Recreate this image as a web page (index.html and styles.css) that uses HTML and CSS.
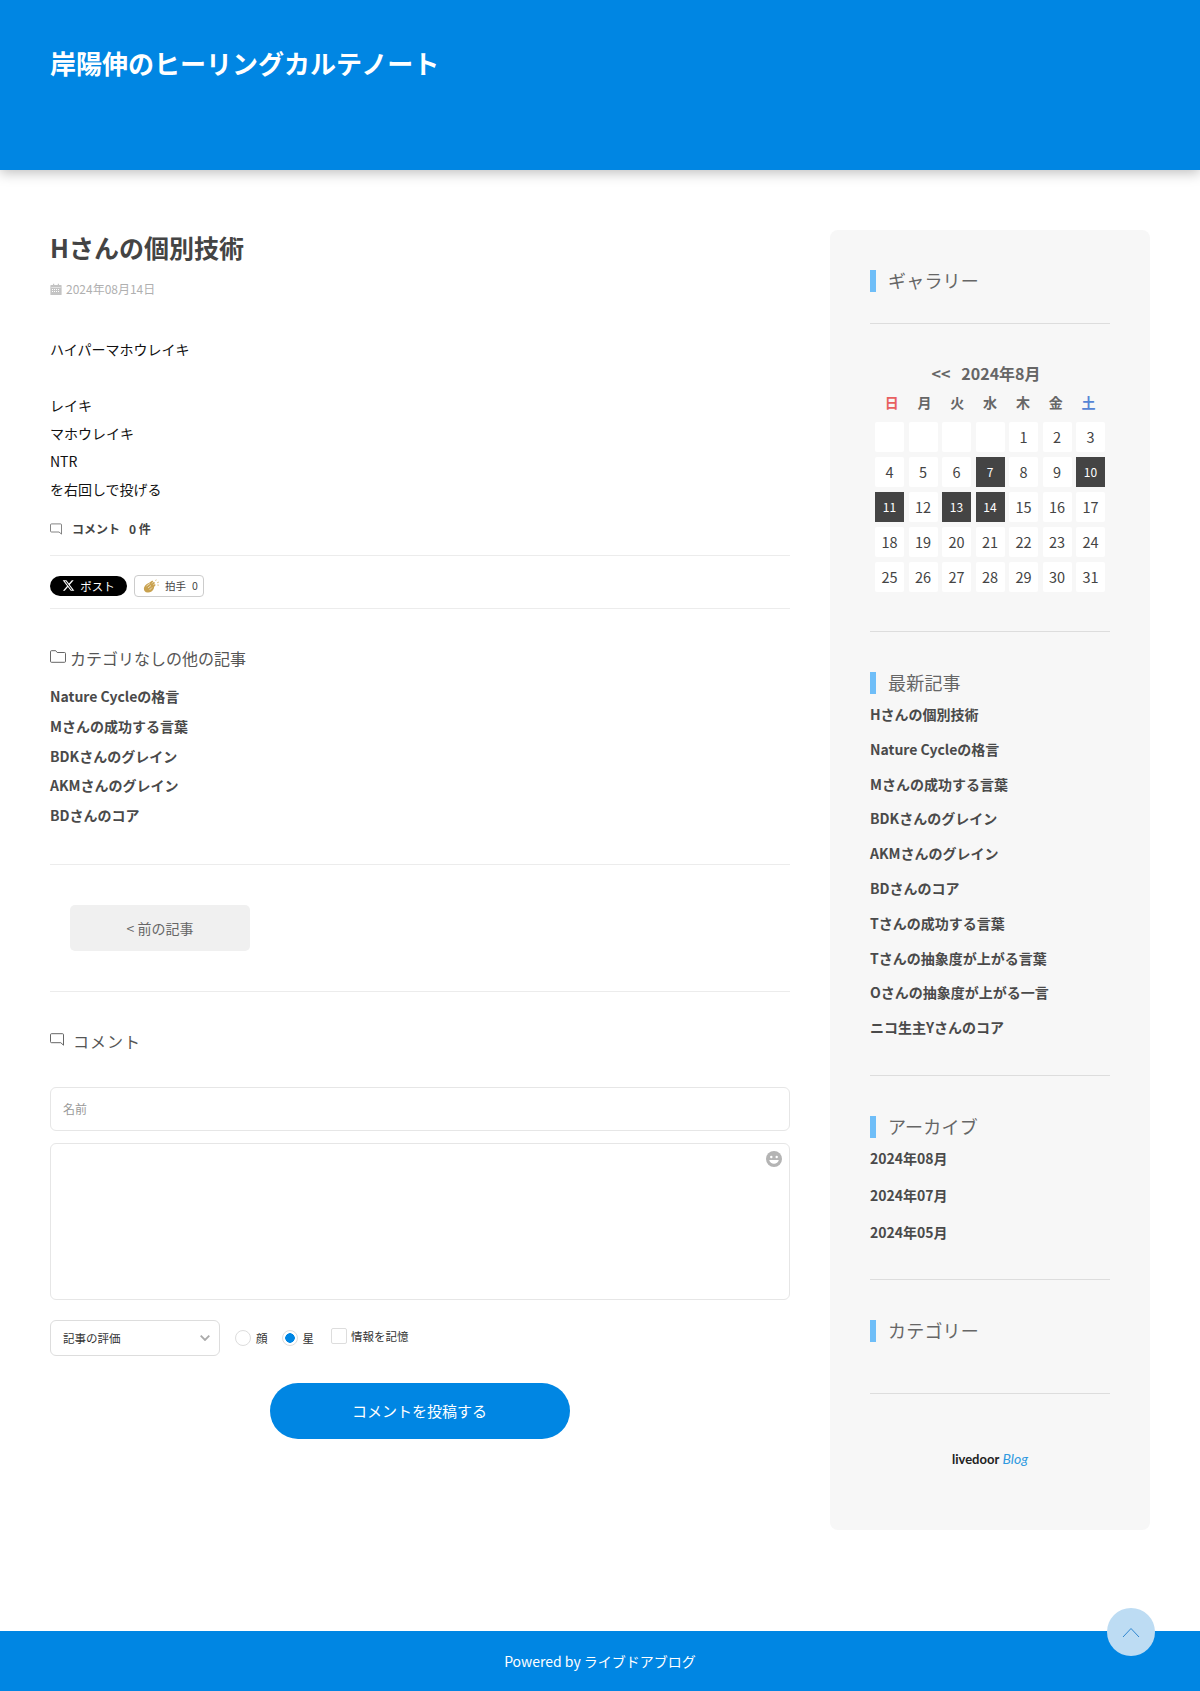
FILE: index.html
```html
<!DOCTYPE html>
<html lang="ja">
<head>
<meta charset="utf-8">
<title>岸陽伸のヒーリングカルテノート</title>
<link rel="stylesheet" href="styles.css">
</head>
<body>
<header class="site-header">
  <h1 class="site-title">岸陽伸のヒーリングカルテノート</h1>
</header>
<div class="wrapper">
  <main class="main">
    <h2 class="entry-title">Hさんの個別技術</h2>
    <p class="entry-date">
      <svg class="ico-cal" viewBox="0 0 12 12" width="12" height="12"><path fill="#c4c4c4" d="M1 2h2V.7h1.2V2h3.6V.7H9V2h2a.6.6 0 0 1 .6.6v8.800a.6.6 0 0 1-.6.6H1a.6.6 0 0 1-.6-.6V2.600A.6.6 0 0 1 1 2z"/><path fill="#fff" d="M1.300 4.300h9.400v.5H1.300zM2 6h1v1H2zm2 0h1v1H4zm2 0h1v1H6zm2 0h1v1H8zM2 8h1v1H2zm2 0h1v1H4zm2 0h1v1H6zm2 0h1v1H8z"/></svg>
      <span>2024年08月14日</span>
    </p>
    <div class="entry-body">
      <p>ハイパーマホウレイキ</p>
      <p>&nbsp;</p>
      <p>レイキ</p>
      <p>マホウレイキ</p>
      <p>NTR</p>
      <p>を右回しで投げる</p>
    </div>
    <p class="entry-comments">
      <svg class="ico-bubble" viewBox="0 0 12 12" width="12" height="12"><path fill="none" stroke="#666" stroke-width=".8" d="M1.500.9h9a1 1 0 0 1 1 1v9.200L9 9H1.500a1 1 0 0 1-1-1V1.900a1 1 0 0 1 1-1z"/></svg>
      <span>コメント</span><span class="count">0 件</span>
    </p>
    <div class="share">
      <span class="x-btn">
        <svg viewBox="0 0 24 24" width="13" height="13"><path fill="#fff" d="M18.240 2.250h3.310l-7.230 8.260 8.500 11.240H16.170l-5.210-6.820-5.970 6.820H1.680l7.730-8.840L1.250 2.250H8.080l4.710 6.230zm-1.160 17.520h1.830L7.080 4.130H5.120z"/></svg>
        <span>ポスト</span>
      </span>
      <span class="clap-btn">
        <svg viewBox="0 0 17 14" width="17" height="14"><g fill="#c9a24f"><ellipse cx="6" cy="8.800" rx="5.400" ry="4.400" transform="rotate(-35 6 8.800)"/><path d="M5.500 4.200 9.300 1.500l1 1.200-3.300 3zM7.500 5.800l3.500-3 1 1.200L8.800 7.200zM9 7.500l2.800-2.600 .9 1.200-2.600 2.800z"/></g><path fill="none" stroke="#fff" stroke-width=".6" d="M3.500 7 7 4.500M5 9l3-2.500M6.500 11 9 8.500"/><path fill="none" stroke="#c9a24f" stroke-width=".6" d="M12.500 2l.8-1.500M14 3.800l2-.8M14.200 6l1.800.2"/></svg>
        <span>拍手</span><span class="clap-num">0</span>
      </span>
    </div>
    <section class="related">
      <h3 class="related-title">
        <svg viewBox="0 0 16 13" width="16" height="13"><path fill="none" stroke="#555" stroke-width=".9" d="M1.500.7h4.200l1.500 1.800h7.300a1 1 0 0 1 1 1v7.800a1 1 0 0 1-1 1H1.500a1 1 0 0 1-1-1V1.700a1 1 0 0 1 1-1z"/></svg>
        <span>カテゴリなしの他の記事</span>
      </h3>
      <ul class="related-list">
        <li>Nature Cycleの格言</li>
        <li>Mさんの成功する言葉</li>
        <li>BDKさんのグレイン</li>
        <li>AKMさんのグレイン</li>
        <li>BDさんのコア</li>
      </ul>
    </section>
    <nav class="pager"><span class="prev-btn">&lt; 前の記事</span></nav>
    <section class="comment-form">
      <h3 class="comment-title">
        <svg viewBox="0 0 14 13" width="14" height="13"><path fill="none" stroke="#555" stroke-width=".9" d="M1.500.7h11a1 1 0 0 1 1 1v10.500l-2.700-2.500H1.500a1 1 0 0 1-1-1V1.700a1 1 0 0 1 1-1z"/></svg>
        <span>コメント</span>
      </h3>
      <div class="field name-field">名前</div>
      <div class="field text-field">
        <svg class="ico-smile" viewBox="0 0 16 16" width="16" height="16"><circle cx="8" cy="8" r="8" fill="#b4b4b4"/><circle cx="5.300" cy="6" r="1.200" fill="#fff"/><circle cx="10.700" cy="6" r="1.200" fill="#fff"/><path fill="#fff" d="M3.200 9h9.600c-.5 2.300-2.500 3.700-4.800 3.700S3.700 11.300 3.200 9z"/></svg>
      </div>
      <div class="rating-row">
        <div class="select">
          <span>記事の評価</span>
          <svg viewBox="0 0 10 6" width="10" height="6"><path fill="none" stroke="#aaa" stroke-width="1.800" d="M.7.7 5 5l4.300-4.300"/></svg>
        </div>
        <span class="radio"></span><span class="radio-label">顔</span>
        <span class="radio on"></span><span class="radio-label">星</span>
        <span class="remember"><span class="check"></span><span>情報を記憶</span></span>
      </div>
      <div class="submit-wrap"><span class="submit">コメントを投稿する</span></div>
    </section>
  </main>
  <aside class="side">
    <section class="widget">
      <h4 class="widget-title">ギャラリー</h4>
      <div class="gallery-gap"></div>
      <div class="cal">
        <div class="cal-head"><span class="cal-prev">&lt;&lt;</span><span>2024年8月</span></div>
        <div class="cal-dows">
          <span class="dow sun">日</span><span class="dow">月</span><span class="dow">火</span><span class="dow">水</span><span class="dow">木</span><span class="dow">金</span><span class="dow sat">土</span>
        </div>
        <div class="cal-grid">
          <span class="d"></span><span class="d"></span><span class="d"></span><span class="d"></span><span class="d">1</span><span class="d">2</span><span class="d">3</span>
          <span class="d">4</span><span class="d">5</span><span class="d">6</span><span class="d on">7</span><span class="d">8</span><span class="d">9</span><span class="d on">10</span>
          <span class="d on">11</span><span class="d">12</span><span class="d on">13</span><span class="d on">14</span><span class="d">15</span><span class="d">16</span><span class="d">17</span>
          <span class="d">18</span><span class="d">19</span><span class="d">20</span><span class="d">21</span><span class="d">22</span><span class="d">23</span><span class="d">24</span>
          <span class="d">25</span><span class="d">26</span><span class="d">27</span><span class="d">28</span><span class="d">29</span><span class="d">30</span><span class="d">31</span>
        </div>
      </div>
    </section>
    <section class="widget">
      <h4 class="widget-title">最新記事</h4>
      <ul class="side-list recent">
        <li>Hさんの個別技術</li>
        <li>Nature Cycleの格言</li>
        <li>Mさんの成功する言葉</li>
        <li>BDKさんのグレイン</li>
        <li>AKMさんのグレイン</li>
        <li>BDさんのコア</li>
        <li>Tさんの成功する言葉</li>
        <li>Tさんの抽象度が上がる言葉</li>
        <li>Oさんの抽象度が上がる一言</li>
        <li>ニコ生主Yさんのコア</li>
      </ul>
    </section>
    <section class="widget">
      <h4 class="widget-title">アーカイブ</h4>
      <ul class="side-list archive">
        <li>2024年08月</li>
        <li>2024年07月</li>
        <li>2024年05月</li>
      </ul>
    </section>
    <section class="widget cat">
      <h4 class="widget-title">カテゴリー</h4>
    </section>
    <div class="logo"><span class="logo-a">livedoor</span> <span class="logo-b">Blog</span></div>
  </aside>
</div>
<footer class="site-footer">Powered by ライブドアブログ</footer>
<a class="to-top"><svg viewBox="0 0 18 11" width="18" height="11"><path fill="none" stroke="#2f86d0" stroke-width="1" d="M1 10 9 1.500 17 10"/></svg></a>
</body>
</html>
```
FILE: styles.css
```css
* { box-sizing: border-box; }
html, body { margin: 0; padding: 0; }
body {
  position: relative;
  font-family: "Noto Sans CJK JP", "Noto Sans", sans-serif;
  color: #444;
  background: #fff;
  font-size: 14px;
}
h1, h2, h3, h4, p, ul { margin: 0; padding: 0; }
ul { list-style: none; }
.site-header {
  height: 170px;
  background: #0086e3;
  padding: 45px 50px 0;
  box-shadow: 0 3px 12px rgba(0, 0, 0, .25);
}
.site-title { font-size: 26px; line-height: 36px; font-weight: 700; color: #fff; }
.wrapper {
  display: flex;
  justify-content: space-between;
  padding: 60px 50px 101px;
}
.main { width: 740px; }
.entry-title { font-size: 25px; line-height: 36px; font-weight: 700; color: #444; margin-top: -1px; }
.entry-date { display: flex; align-items: center; gap: 4px; margin-top: 14px; font-size: 12px; line-height: 20px; color: #b0b0b0; }
.entry-body { margin-top: 36px; color: #111; }
.entry-body p { line-height: 28px; }
.entry-comments { display: flex; align-items: center; margin-top: 16px; font-size: 12px; line-height: 20px; font-weight: 700; color: #444; padding-bottom: 16px; border-bottom: 1px solid #ececec; }
.entry-comments svg { margin-right: 10px; }
.entry-comments .count { margin-left: 9px; }
.share { display: flex; align-items: center; gap: 7px; height: 53px; padding-top: 7px; border-bottom: 1px solid #ececec; }
.x-btn { display: inline-flex; align-items: center; gap: 5px; justify-content: center; width: 77px; height: 20px; background: #000; color: #fff; border-radius: 10px; font-size: 11.500px; }
.clap-btn { display: inline-flex; align-items: center; height: 22px; width: 70px; padding-left: 8px; border: 1px solid #ccc; border-radius: 4px; font-size: 10.500px; color: #444; }
.clap-btn svg { margin-right: 5px; }
.clap-num { margin-left: 6px; }
.related { padding-top: 37px; padding-bottom: 33px; border-bottom: 1px solid #ececec; }
.related-title { display: flex; align-items: center; gap: 4px; font-size: 16px; line-height: 24px; font-weight: 400; color: #555; }
.related-title svg { margin-top: -4px; }
.related-list { margin-top: 12px; }
.related-list li { font-size: 14px; line-height: 29.800px; font-weight: 700; color: #4a4a4a; }
.pager { padding: 40px 0 40px 20px; border-bottom: 1px solid #ececec; }
.prev-btn { display: block; width: 180px; height: 46px; line-height: 46px; text-align: center; background: #f0f0f0; border-radius: 5px; color: #666; font-size: 14px; }
.comment-form { padding-top: 36px; }
.comment-title { display: flex; align-items: center; gap: 9px; font-size: 16px; line-height: 26px; font-weight: 400; color: #555; letter-spacing: 1px; }
.comment-title svg { margin-top: -3px; }
.field { border: 1px solid #e6e6e6; border-radius: 6px; background: #fff; }
.name-field { margin-top: 33px; height: 44px; line-height: 42px; padding-left: 12px; font-size: 12px; color: #999; }
.text-field { position: relative; margin-top: 12px; height: 157px; }
.ico-smile { position: absolute; top: 7px; right: 7px; }
.rating-row { display: flex; align-items: center; margin-top: 20px; font-size: 11.500px; color: #333; }
.select { display: flex; align-items: center; justify-content: space-between; width: 170px; height: 36px; padding: 0 9px 0 12px; border: 1px solid #ddd; border-radius: 6px; margin-right: 15px; }
.radio { width: 16px; height: 16px; border: 1px solid #ddd; border-radius: 50%; background: #fff; margin-right: 5px; }
.radio.on { background: radial-gradient(circle, #0086e3 0 4.500px, #fff 5px); }
.radio-label { margin-right: 14px; }
.remember { display: flex; align-items: center; gap: 4px; margin-left: 3px; margin-top: -3px; }
.check { width: 16px; height: 16px; border: 1px solid #ddd; border-radius: 2px; background: #fff; }
.submit-wrap { display: flex; justify-content: center; margin-top: 27px; margin-right: 1px; }
.submit { display: block; width: 300px; height: 56px; line-height: 56px; text-align: center; background: #0086e3; color: #fff; border-radius: 28px; font-size: 15px; }
.side { width: 320px; height: 1300px; padding: 40px; background: #f7f7f7; border-radius: 8px; }
.widget { border-bottom: 1px solid #ddd; }
.widget-title { height: 22px; line-height: 20px; padding-left: 12px; border-left: 6px solid #6fbef8; font-size: 18px; font-weight: 400; color: #666; letter-spacing: .2px; }
.gallery-gap { height: 32px; border-bottom: 1px solid #ddd; margin-bottom: 37px; }
.cal { padding: 0 5px 39px; }
.cal-head { display: flex; justify-content: center; gap: 11px; font-size: 16px; line-height: 24px; font-weight: 700; color: #666; padding-right: 8px; }
.cal-dows { display: grid; grid-template-columns: repeat(7, 28.800px); column-gap: 4px; margin: 2px 0 5px 2.300px; }
.dow { text-align: center; font-size: 14px; line-height: 30px; font-weight: 700; color: #666; }
.dow.sun { color: #e86060; }
.dow.sat { color: #5585d5; }
.cal-grid { display: grid; grid-template-columns: repeat(7, 29px); column-gap: 4.500px; row-gap: 5px; grid-auto-rows: 30px; }
.d { display: block; text-align: center; line-height: 30px; background: #fff; border-radius: 2px; font-size: 14.500px; color: #444; }
.d.on { background: #444; color: #fff; font-size: 12px; border-radius: 0; }
.side-list li { font-size: 14px; font-weight: 700; color: #4a4a4a; }
.recent { padding: 0 0 30px; margin-top: 3px; }
.recent li { line-height: 34.800px; }
.archive { padding: 0 0 28px; margin-top: 2px; }
.archive li { line-height: 37px; }
.widget + .widget { margin-top: 40px; }
.cat { padding-bottom: 51px; }
.logo { margin-top: 53px; text-align: center; font-family: "Lato", sans-serif; font-size: 13px; line-height: 24px; }
.logo-a { font-weight: 700; color: #222; }
.logo-b { font-style: italic; color: #2f9ae0; font-size: 14px; }
.site-footer { height: 60px; background: #0086e3; color: #fff; text-align: center; line-height: 60px; font-size: 14px; }
.to-top { position: absolute; left: 1107px; top: 1608px; width: 48px; height: 48px; border-radius: 50%; background: #bddcf3; display: flex; align-items: center; justify-content: center; }
```
